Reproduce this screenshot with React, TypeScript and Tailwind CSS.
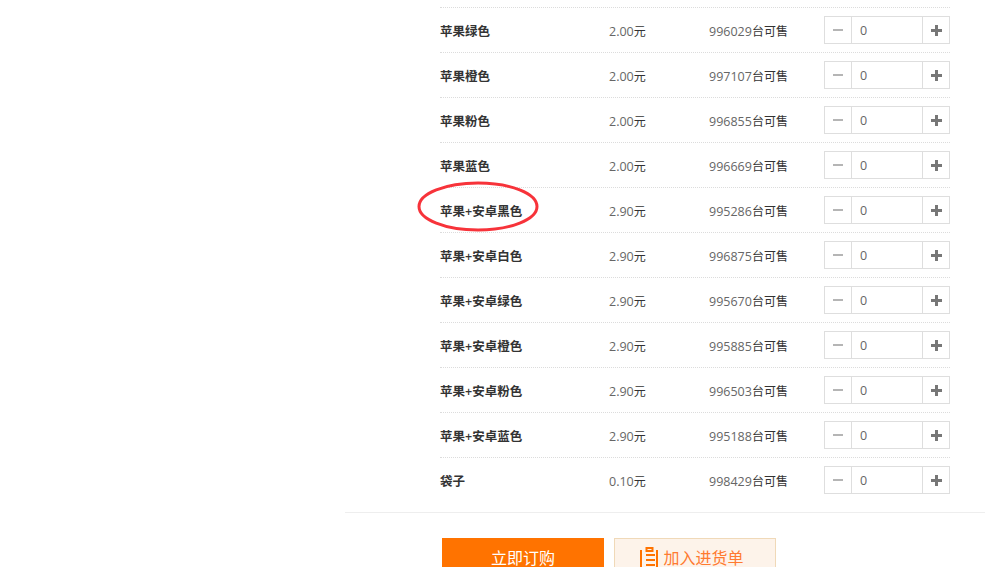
const rows = [
  { name: "苹果绿色", price: "2.00", stock: "996029" },
  { name: "苹果橙色", price: "2.00", stock: "997107" },
  { name: "苹果粉色", price: "2.00", stock: "996855" },
  { name: "苹果蓝色", price: "2.00", stock: "996669" },
  { name: "苹果+安卓黑色", price: "2.90", stock: "995286" },
  { name: "苹果+安卓白色", price: "2.90", stock: "996875" },
  { name: "苹果+安卓绿色", price: "2.90", stock: "995670" },
  { name: "苹果+安卓橙色", price: "2.90", stock: "995885" },
  { name: "苹果+安卓粉色", price: "2.90", stock: "996503" },
  { name: "苹果+安卓蓝色", price: "2.90", stock: "995188" },
  { name: "袋子", price: "0.10", stock: "998429" },
];

function Stepper() {
  return (
    <div className="flex h-[28px] w-[126px] border border-[#dedede] bg-white">
      <div className="flex w-[27px] items-center justify-center border-r border-[#dedede]">
        <span className="h-[2px] w-[10px] bg-[#b5b5b5]" />
      </div>
      <div className="flex-1 pl-[8px] text-[12.5px] leading-[27px] text-[#666]">0</div>
      <div className="relative flex w-[27px] items-center justify-center border-l border-[#dedede]">
        <span className="h-[3px] w-[11px] bg-[#777]" />
        <span className="absolute h-[11px] w-[3px] bg-[#777]" />
      </div>
    </div>
  );
}

export default function App() {
  return (
    <div className="relative h-[567px] w-[1006px] overflow-hidden bg-white pt-[7px] font-['Open_Sans','Noto_Sans_CJK_SC',sans-serif] text-[12px]">
      <div className="ml-[440px] w-[510px]">
        {rows.map((r) => (
          <div key={r.name} className="flex h-[45px] items-center border-t border-dotted border-[#dcdcdc]">
            <div className="w-[169px] pt-[4px] text-[12.5px] font-semibold text-[#333]">{r.name}</div>
            <div className="w-[100px] pt-[4px] text-[12.5px] text-[#666]">
              {r.price}
              <span className="text-[12px] text-[#333]">元</span>
            </div>
            <div className="w-[115px] pt-[4px] text-[12.5px] text-[#666]">
              {r.stock}
              <span className="text-[12px] text-[#333]">台可售</span>
            </div>
            <Stepper />
          </div>
        ))}
      </div>

      <div className="ml-[345px] mt-[10px] h-px w-[640px] bg-[#eeeeee]" />

      <div className="ml-[442px] mt-[25px] flex gap-[10px]">
        <div className="flex h-[40px] w-[162px] items-center justify-center bg-[#ff7300] text-[16px] leading-none text-white">
          立即订购
        </div>
        <div className="flex h-[40px] w-[162px] items-center justify-center gap-[5px] border border-[#f0d9b8] bg-[#fdf3ea] pr-[6px] text-[16px] leading-none text-[#ff7a30]">
          <svg width="18" height="24" viewBox="0 0 18 24" fill="none" className="shrink-0 text-[#ff7300]">
            <path d="M1 4v20M17 4v20" stroke="currentColor" strokeWidth="2" />
            <path d="M6.5 2h6v3h-6zM6 9h9M6 14h9M6 19h9" stroke="currentColor" strokeWidth="2" />
          </svg>
          加入进货单
        </div>
      </div>

      {/* hand-drawn highlight round the black variant */}
      <svg className="absolute left-[415px] top-[180px]" width="126" height="54" viewBox="0 0 126 54" fill="none">
        <ellipse cx="63" cy="26.5" rx="59" ry="23.5" stroke="#f7333a" strokeWidth="3" />
      </svg>
    </div>
  );
}
